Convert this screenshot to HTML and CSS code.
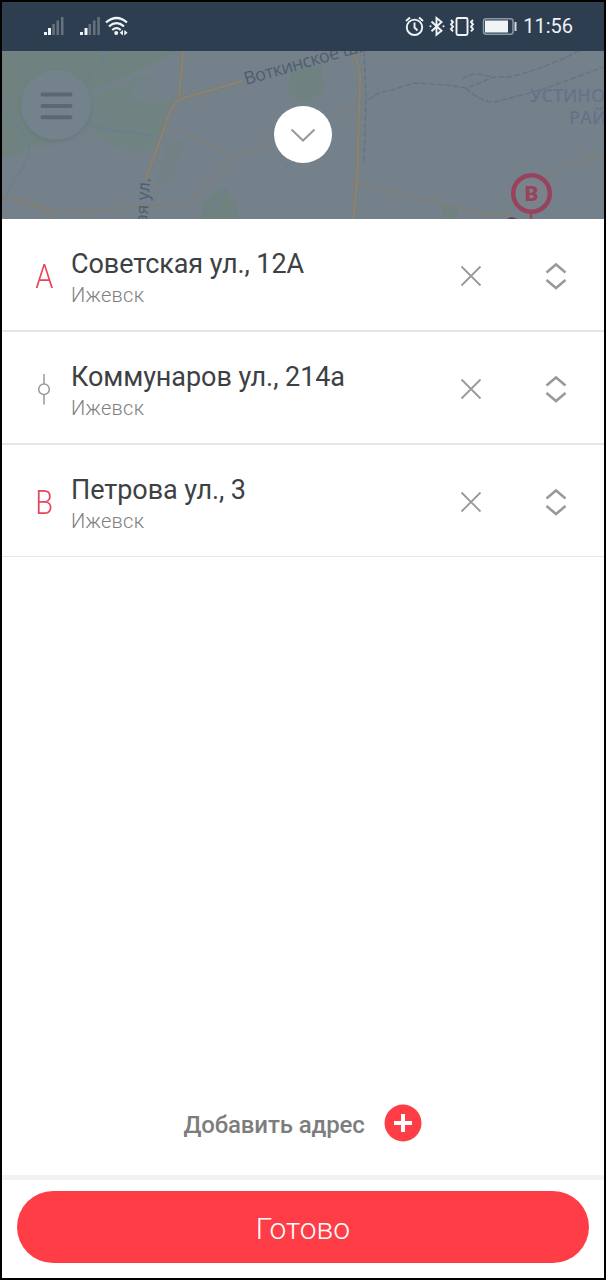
FILE: index.html
```
<!DOCTYPE html>
<html lang="ru">
<head>
  <meta charset="UTF-8">
  <meta name="viewport" content="width=device-width, initial-scale=1.0">
  <title>Маршрут</title>
  <link rel="stylesheet" href="styles.css">
</head>
<body>
  <div class="phone">
    <!-- Статус-бар -->
    <div class="status-bar">
      <svg class="status-left" viewBox="40 12 92 26" width="92" height="26">
        <g fill="#f1f4f7">
          <rect x="44" y="31" width="3" height="3"/>
          <rect x="48" y="27" width="3" height="7"/>
          <rect x="80" y="31" width="3" height="3"/>
          <rect x="84.500" y="27" width="3" height="7"/>
        </g>
        <g fill="#66737f">
          <rect x="52.300" y="23" width="2.500" height="11"/>
          <rect x="56.500" y="19.500" width="2.500" height="14.500"/>
          <rect x="61" y="16" width="2.500" height="18"/>
          <rect x="88.500" y="23" width="2.500" height="11"/>
          <rect x="93" y="19.500" width="2.500" height="14.500"/>
          <rect x="97.300" y="16" width="2.500" height="18"/>
        </g>
        <g fill="none" stroke="#f1f4f7" stroke-width="2.200">
          <path d="M106 21.500q10.500-9 21 0"/>
          <path d="M109 25.300q7.500-6.300 15 0"/>
          <path d="M112.300 29q4.200-3.600 8.400 0"/>
        </g>
        <circle cx="116.200" cy="32" r="2" fill="#f1f4f7"/>
        <path d="M123 29v5.500l-3.300-2.700zM124.300 29v5.500l3.300-2.700z" fill="#f1f4f7"/>
      </svg>
      <div class="status-right">
        <svg viewBox="403 12 116 26" width="116" height="26">
          <g fill="none" stroke="#f1f4f7" stroke-width="1.900">
            <!-- будильник -->
            <circle cx="414.500" cy="26.300" r="7.700"/>
            <path d="M414.500 21.500v5l3 3M406 20l4-3.500M423 20l-4-3.500"/>
            <!-- bluetooth -->
            <path d="M431.500 20.500l10 9.300-5 4V17l5 4-10 9.300"/>
            <!-- вибрация -->
            <rect x="456.500" y="17" width="11" height="17" rx="1.500"/>
            <path d="M451 19l2 2-2 2.300 2 2.400-2 2.300 2 2.400M473 19l-2 2 2 2.300-2 2.400 2 2.300-2 2.400"/>
            <!-- батарея -->
            <rect x="483.500" y="17.800" width="29.500" height="15.500" rx="2.500" stroke="#8c98a3" stroke-width="1.500"/>
          </g>
          <circle cx="430.500" cy="25.300" r="1" fill="#f1f4f7"/>
          <circle cx="443.500" cy="25.300" r="1" fill="#f1f4f7"/>
          <rect x="485" y="19.500" width="23" height="12" fill="#f1f4f7"/>
          <rect x="514.500" y="21" width="2" height="9" fill="#d5dade"/>
        </svg>
        <span class="clock">11:56</span>
      </div>
    </div>

    <!-- Карта под затемнением -->
    <div class="map">
      <svg class="map-canvas" viewBox="2 51 602 168" width="602" height="168">
        <defs>
          <filter id="shadow" x="-30%" y="-30%" width="160%" height="160%">
            <feGaussianBlur stdDeviation="2.500"/>
          </filter>
        </defs>
        <rect x="2" y="51" width="602" height="168" fill="#74818b"/>
        <g fill="#70827f">
          <path d="M2 51H176Q150 66 126 76L92 90 88 125 60 142 28 148 22 154 2 158z"/>
          <path d="M88 104Q98 90 112 88 130 84 135 76q18-4 21 12-4 14-15 14 6 2 20-2l15-3-8 24-10 28q-30 4-50-4l-18-16z" opacity=".85"/>
          <path d="M287 90L291 72 321 65l3 27-16 10-14-4z"/>
          <path d="M200 219L204 203Q212 190 226 189L235 203 239 219z"/>
          <path d="M168 138l16 3-12 46h-16z" opacity=".35"/>
          <path d="M442 205h16v14h-16z"/>
        </g>
        <path d="M136 82q16-8 20 6-3 14-14 14-12-2-12-10z" fill="#74818b" opacity=".8"/>
        <g fill="none" stroke="#687f90" stroke-width="1.500">
          <path d="M105 51q0 14-9 18t-10 19"/>
          <path d="M2 107q6 10 8 14 8 4 14 13t5 17q-3 13-9 21T4 200"/>
          <path d="M88 123q12 7 31 8 18 1 35 6"/>
          <path d="M226 188l-10 16-14 9M292 163l-7 5"/>
        </g>
        <g fill="none" stroke="#7e7e78" stroke-linejoin="round">
          <path stroke-width="4.500" d="M183 51q-2 29-4 46M242 81l-40 12q-20 4-25 8-7 8-11 22l-20 56"/>
          <path stroke-width="1.800" d="M168 127q15 4 31 12 18 9 33 18M329 116l30-13"/>
          <path stroke-width="1.800" d="M275 141l-38 17h-5l-43 46-136 8"/>
          <path stroke-width="3.500" d="M52 212Q28 201 2 197M52 213v6"/>
          <path stroke-width="2" d="M89 212v7"/>
          <path stroke-width="5" d="M354 53q7 16 6 30l-3 100-4 36"/>
          <path stroke-width="2.300" d="M356 184l60 13 63 16q21 3 34-1M548 178q7-10 21-13l35-11"/>
        </g>
        <circle cx="356" cy="184" r="4" fill="#7e7e78"/>
        <path d="M183 51q-2 29-4 46M242 81l-40 12q-20 4-25 8-7 8-11 22l-20 56M354 53q7 16 6 30l-3 100-4 36" fill="none" stroke="#86857b" stroke-width="1.500"/>
        <g fill="none" stroke="#667382" stroke-width="1.400" stroke-dasharray="6 2">
          <path d="M364 51l2 45-2 68"/>
          <path d="M368 100q12-9 24-10l22-7q26 1 53 5l27-11h14q25-4 74-27"/>
          <path d="M462 79q8-6 16-5l15 3M466 88q14 14 29 14l46-12 33-12 30-11"/>
        </g>
        <g class="map-label">
          <text x="246" y="85" font-size="18" textLength="122" transform="rotate(-16 246 85)">Воткинское ш.</text>
          <text x="147" y="224" font-size="17" transform="rotate(-86 147 224)">ая ул.</text>
        </g>
        <g class="map-district">
          <text x="530" y="102">УСТИНОВСКИЙ</text>
          <text x="569" y="123.500">РАЙОН</text>
        </g>
        <!-- кнопка меню -->
        <circle cx="56" cy="107.500" r="34.500" fill="#62707b" filter="url(#shadow)" opacity=".6"/>
        <circle cx="56" cy="105" r="35" fill="#74828b"/>
        <path d="M42.500 94.500h28M42.500 106h28M42.500 117.300h28" stroke="#5b6872" stroke-width="4" stroke-linecap="round"/>
        <!-- метка B -->
        <path d="M531 213v6" stroke="#98475e" stroke-width="2.500"/>
        <path d="M507 219q5-3.500 10 0z" fill="#653b54"/>
        <circle cx="531.500" cy="193.500" r="18.300" fill="#78838c" stroke="#98435b" stroke-width="4.500"/>
        <text class="pin-letter" x="531.500" y="201" text-anchor="middle">B</text>
      </svg>
      <div class="collapse">
        <svg viewBox="0 0 26 14" width="26" height="14">
          <path d="M1.500 1.500L13 12.500 24.500 1.500" fill="none" stroke="#999" stroke-width="2"/>
        </svg>
      </div>
    </div>

    <!-- Список адресов -->
    <div class="addresses">
      <div class="address">
        <div class="marker"><span class="letter">А</span></div>
        <div class="info">
          <div class="street">Советская ул., 12А</div>
          <div class="city">Ижевск</div>
        </div>
        <svg class="remove" viewBox="0 0 22 22" width="22" height="22"><path d="M1.500 1.500l19 19M20.500 1.500l-19 19"/></svg>
        <svg class="sort" viewBox="0 0 22 28" width="22" height="28"><path d="M1.500 10.500L11 2.500 20.500 10.500M1.500 18l9.500 8 9.500-8"/></svg>
      </div>
      <div class="address">
        <div class="marker">
          <svg viewBox="0 0 14 32" width="14" height="32"><path d="M7 1v10M7 21.500v10"/><circle cx="7" cy="16.200" r="5.300"/></svg>
        </div>
        <div class="info">
          <div class="street">Коммунаров ул., 214а</div>
          <div class="city">Ижевск</div>
        </div>
        <svg class="remove" viewBox="0 0 22 22" width="22" height="22"><path d="M1.500 1.500l19 19M20.500 1.500l-19 19"/></svg>
        <svg class="sort" viewBox="0 0 22 28" width="22" height="28"><path d="M1.500 10.500L11 2.500 20.500 10.500M1.500 18l9.500 8 9.500-8"/></svg>
      </div>
      <div class="address">
        <div class="marker"><span class="letter">В</span></div>
        <div class="info">
          <div class="street">Петрова ул., 3</div>
          <div class="city">Ижевск</div>
        </div>
        <svg class="remove" viewBox="0 0 22 22" width="22" height="22"><path d="M1.500 1.500l19 19M20.500 1.500l-19 19"/></svg>
        <svg class="sort" viewBox="0 0 22 28" width="22" height="28"><path d="M1.500 10.500L11 2.500 20.500 10.500M1.500 18l9.500 8 9.500-8"/></svg>
      </div>
    </div>

    <div class="add-address">
      <span>Добавить адрес</span>
      <svg viewBox="0 0 38 38" width="38" height="38">
        <circle cx="19" cy="19" r="18.500" fill="#ff3d47"/>
        <path d="M19 10v18M10 19h18" stroke="#fff" stroke-width="4"/>
      </svg>
    </div>

    <div class="footer">
      <button class="done">Готово</button>
    </div>
  </div>
</body>
</html>
```
FILE: styles.css
```
* {
  box-sizing: border-box;
}

body {
  margin: 0;
  font-family: Roboto, sans-serif;
  background: #fff;
}

.phone {
  display: flex;
  flex-direction: column;
  height: 1280px;
  border: 2px solid #000;
  overflow: hidden;
}

/* Статус-бар */
.status-bar {
  display: flex;
  justify-content: space-between;
  align-items: center;
  flex: none;
  height: 49px;
  padding: 0 31px 2px 38px;
  background: #2d3e50;
}

.status-right {
  display: flex;
  align-items: center;
  gap: 4px;
}

.clock {
  color: #eef1f4;
  font-size: 20px;
  line-height: 26px;
}

/* Карта */
.map {
  position: relative;
  flex: none;
  height: 168px;
}

.map-canvas {
  display: block;
}

.map-label {
  fill: #505d6d;
  font-family: "Open Sans", sans-serif;
}

.map-district {
  fill: #66728a;
  font-family: "Open Sans", sans-serif;
  font-size: 18px;
  font-weight: 600;
}

.pin-letter {
  fill: #98435b;
  font-size: 21px;
  font-weight: 900;
}

.collapse {
  position: absolute;
  top: 55px;
  left: 272px;
  display: flex;
  justify-content: center;
  align-items: center;
  width: 58px;
  height: 57px;
  border-radius: 50%;
  background: #fff;
}

/* Адреса */
.address {
  display: flex;
  align-items: center;
  height: 113px;
  padding: 0 37px 0 28px;
  border-bottom: 2px solid #e6e6e6;
}

.address:last-child {
  height: 112px;
  border-bottom-width: 1px;
}

.marker {
  display: flex;
  justify-content: center;
  align-items: center;
  width: 28px;
  margin-right: 13px;
  padding-top: 2px;
  color: #e8465a;
  font-size: 33px;
  font-weight: 300;
  line-height: 36px;
}

.letter {
  padding-top: 2px;
  transform: scaleX(.88);
}

.marker svg {
  fill: none;
  stroke: #999;
  stroke-width: 1.5;
}

.info {
  flex: 1;
  padding-top: 8px;
}

.street {
  color: #3d4144;
  font-size: 27px;
  letter-spacing: -0.07px;
  line-height: 32px;
}

.city {
  color: #808080;
  font-size: 20px;
  font-weight: 300;
  letter-spacing: 0.3px;
  line-height: 30px;
}

.remove {
  margin: 3px 63px 0 0;
  fill: none;
  stroke: #999;
  stroke-width: 1.8;
}

.sort {
  margin-top: 2px;
  fill: none;
  stroke: #999;
  stroke-width: 2.5;
}

/* Добавить адрес */
.add-address {
  display: flex;
  justify-content: center;
  align-items: center;
  gap: 19px;
  height: 38px;
  margin-top: auto;
  margin-bottom: 33px;
  padding-right: 1px;
  color: #7d7d7d;
  font-size: 24px;
  font-weight: 500;
  letter-spacing: -0.13px;
}

.add-address span {
  padding-top: 3px;
}

.footer {
  flex: none;
  height: 103px;
  padding: 11px 15px 15px 15px;
  border-top: 5px solid #f2f2f2;
}

.done {
  display: block;
  width: 100%;
  height: 72px;
  padding: 3px 0 0;
  border: none;
  border-radius: 36px;
  background: #ff3d47;
  color: #fff;
  font-family: inherit;
  font-size: 30px;
  font-weight: 300;
  cursor: pointer;
}
```
